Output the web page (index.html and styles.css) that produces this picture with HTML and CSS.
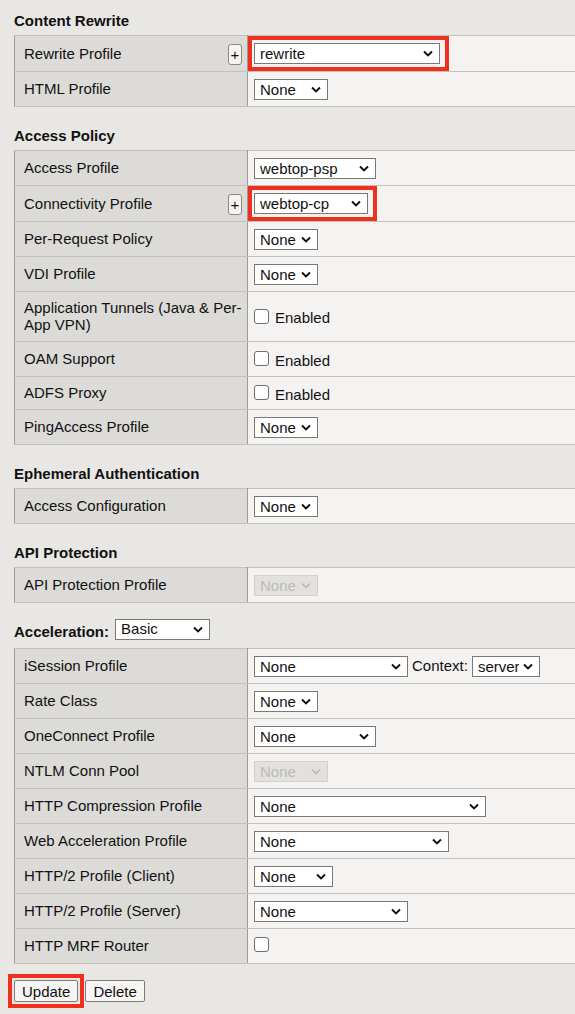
FILE: index.html
```html
<!DOCTYPE html>
<html lang="en">
<head>
<meta charset="utf-8">
<title>Profiles</title>
<link rel="stylesheet" href="styles.css">
</head>
<body>
<div class="page">

  <div class="sec-title">Content Rewrite</div>
  <table class="props">
    <colgroup><col class="col-label"><col class="col-value"></colgroup>
    <tr>
      <td class="lbl"><div class="lbl-row"><span>Rewrite Profile</span><button class="plus" type="button">+</button></div></td>
      <td class="val hl-cell"><span class="hl"><select class="sel w186"><option>rewrite</option></select></span></td>
    </tr>
    <tr>
      <td class="lbl">HTML Profile</td>
      <td class="val"><select class="sel w74"><option>None</option></select></td>
    </tr>
  </table>

  <div class="sec-title">Access Policy</div>
  <table class="props">
    <colgroup><col class="col-label"><col class="col-value"></colgroup>
    <tr>
      <td class="lbl">Access Profile</td>
      <td class="val"><select class="sel w122"><option>webtop-psp</option></select></td>
    </tr>
    <tr>
      <td class="lbl"><div class="lbl-row"><span>Connectivity Profile</span><button class="plus" type="button">+</button></div></td>
      <td class="val hl-cell"><span class="hl"><select class="sel w114"><option>webtop-cp</option></select></span></td>
    </tr>
    <tr>
      <td class="lbl">Per-Request Policy</td>
      <td class="val"><select class="sel w64"><option>None</option></select></td>
    </tr>
    <tr>
      <td class="lbl">VDI Profile</td>
      <td class="val"><select class="sel w64"><option>None</option></select></td>
    </tr>
    <tr>
      <td class="lbl">Application Tunnels (Java &amp; Per-App VPN)</td>
      <td class="val"><label class="chk"><input type="checkbox"> Enabled</label></td>
    </tr>
    <tr>
      <td class="lbl">OAM Support</td>
      <td class="val"><label class="chk"><input type="checkbox"> Enabled</label></td>
    </tr>
    <tr>
      <td class="lbl">ADFS Proxy</td>
      <td class="val val-short"><label class="chk"><input type="checkbox"> Enabled</label></td>
    </tr>
    <tr>
      <td class="lbl">PingAccess Profile</td>
      <td class="val"><select class="sel w64"><option>None</option></select></td>
    </tr>
  </table>

  <div class="sec-title">Ephemeral Authentication</div>
  <table class="props">
    <colgroup><col class="col-label"><col class="col-value"></colgroup>
    <tr>
      <td class="lbl">Access Configuration</td>
      <td class="val"><select class="sel w64"><option>None</option></select></td>
    </tr>
  </table>

  <div class="sec-title">API Protection</div>
  <table class="props">
    <colgroup><col class="col-label"><col class="col-value"></colgroup>
    <tr>
      <td class="lbl">API Protection Profile</td>
      <td class="val"><select class="sel w64" disabled><option>None</option></select></td>
    </tr>
  </table>

  <div class="sec-title sec-title-ctl"><span>Acceleration:</span><select class="sel sel-basic"><option>Basic</option></select></div>
  <table class="props">
    <colgroup><col class="col-label"><col class="col-value"></colgroup>
    <tr>
      <td class="lbl">iSession Profile</td>
      <td class="val"><div class="val-row"><select class="sel w154"><option>None</option></select><span class="ctx">Context:</span><select class="sel w68"><option>server</option></select></div></td>
    </tr>
    <tr>
      <td class="lbl">Rate Class</td>
      <td class="val"><select class="sel w64"><option>None</option></select></td>
    </tr>
    <tr>
      <td class="lbl">OneConnect Profile</td>
      <td class="val"><select class="sel w122"><option>None</option></select></td>
    </tr>
    <tr>
      <td class="lbl">NTLM Conn Pool</td>
      <td class="val"><select class="sel w74" disabled><option>None</option></select></td>
    </tr>
    <tr>
      <td class="lbl">HTTP Compression Profile</td>
      <td class="val"><select class="sel w232"><option>None</option></select></td>
    </tr>
    <tr>
      <td class="lbl">Web Acceleration Profile</td>
      <td class="val"><select class="sel w195"><option>None</option></select></td>
    </tr>
    <tr>
      <td class="lbl">HTTP/2 Profile (Client)</td>
      <td class="val"><select class="sel w79"><option>None</option></select></td>
    </tr>
    <tr>
      <td class="lbl">HTTP/2 Profile (Server)</td>
      <td class="val"><select class="sel w154"><option>None</option></select></td>
    </tr>
    <tr>
      <td class="lbl">HTTP MRF Router</td>
      <td class="val"><input class="cb" type="checkbox"></td>
    </tr>
  </table>

  <div class="actions">
    <span class="hl hl-btn"><button class="btn" type="button">Update</button></span>
    <button class="btn" type="button">Delete</button>
  </div>

</div>
</body>
</html>
```

FILE: styles.css
```css
html, body {
  margin: 0;
  padding: 0;
  overflow: hidden;
  background: #e8e7e3;
}

body {
  font-family: "Liberation Sans", Arial, Helvetica, sans-serif;
  font-size: 15px;
  color: #111;
}

.page {
  padding: 12px 0 0 14px;
}

.sec-title {
  font-weight: bold;
  line-height: 18px;
  margin: 0 0 5px 0;
}

.props + .sec-title {
  margin-top: 20px;
}

.sec-title-ctl {
  display: flex;
  align-items: flex-start;
  gap: 6px;
  height: 18px;
  margin-bottom: 7px;
}

.props {
  border-collapse: collapse;
  table-layout: fixed;
  width: 580px;
  border: 1px solid #9c9b98;
}

.col-label { width: 233px; }

.props td {
  border-top: 1px solid #c2c1be;
  border-bottom: 1px solid #c2c1be;
  vertical-align: middle;
  line-height: 17px;
  padding: 0;
}

.props td.lbl {
  background: #dcdbd8;
  padding: 7px 5px 8px 9px;
  border-right: 1px solid #9c9b98;
}

.props td.val {
  background: #f4f3f1;
  height: 34px;
  padding: 0 0 0 6px;
}

.props td.val.val-short {
  height: 32px;
}

.props td.val.hl-cell {
  padding-left: 0;
}

.lbl-row {
  display: flex;
  align-items: flex-start;
  justify-content: space-between;
  height: 17px;
}

.plus {
  width: 14px;
  height: 21px;
  margin-top: -1px;
  padding: 0;
  border: 1px solid #8a8987;
  border-radius: 3px;
  background: #f6f5f3;
  font-family: "Liberation Sans", Arial, sans-serif;
  font-size: 15px;
  line-height: 17px;
  color: #111;
}

.hl {
  display: inline-flex;
  border: 4px solid #f0301f;
  padding: 3px 5px 3px 2px;
}

.sel {
  -webkit-appearance: none;
  appearance: none;
  height: 21px;
  border: 1px solid #7a7977;
  border-radius: 0;
  background: #fff url("data:image/svg+xml;utf8,<svg xmlns='http://www.w3.org/2000/svg' width='10' height='7' viewBox='0 0 10 7'><path d='M1 1.5l4 4 4-4' fill='none' stroke='%23111' stroke-width='1.9'/></svg>") no-repeat right 6px center;
  font-family: "Liberation Sans", Arial, sans-serif;
  font-size: 15px;
  color: #111;
  padding: 0 20px 0 5px;
  margin: 0;
  vertical-align: middle;
}

.sel:disabled {
  background-color: #dcdad6;
  border-color: #c4c3c0;
  color: #a3a2a0;
  background-image: url("data:image/svg+xml;utf8,<svg xmlns='http://www.w3.org/2000/svg' width='10' height='7' viewBox='0 0 10 7'><path d='M1 1.5l4 4 4-4' fill='none' stroke='%23a3a2a0' stroke-width='1.6'/></svg>");
}

.sel-basic {
  width: 95px;
  height: 21px;
  margin-top: -4px;
  font-weight: normal;
  padding-bottom: 3px;
}

.w64 { width: 64px; }
.w68 { width: 68px; }
.w74 { width: 74px; }
.w79 { width: 79px; }
.w114 { width: 114px; }
.w122 { width: 122px; }
.w154 { width: 154px; }
.w186 { width: 186px; }
.w195 { width: 195px; }
.w232 { width: 232px; }

.val-row {
  display: flex;
  align-items: center;
  gap: 4px;
}

.ctx {
  line-height: 17px;
  padding-bottom: 2px;
}

.chk {
  display: inline-flex;
  align-items: center;
  gap: 6px;
  padding-top: 3px;
}

.chk input, .cb {
  -webkit-appearance: none;
  appearance: none;
  width: 15px;
  height: 15px;
  margin: 0;
  border: 1px solid #6f6e6c;
  border-radius: 3px;
  background: #fff;
}

.chk input {
  margin-top: -3px;
}

.cb {
  display: block;
  margin-top: -4px;
}

.actions {
  display: flex;
  align-items: center;
  gap: 1px;
  margin: 10px 0 0 -6px;
}

.hl-btn {
  padding: 2px;
}

.btn {
  height: 22px;
  padding: 0 7px;
  border: 1px solid #7d7c7a;
  border-radius: 2px;
  background: #f6f5f3;
  font-family: "Liberation Sans", Arial, sans-serif;
  font-size: 15px;
  color: #111;
}
```
